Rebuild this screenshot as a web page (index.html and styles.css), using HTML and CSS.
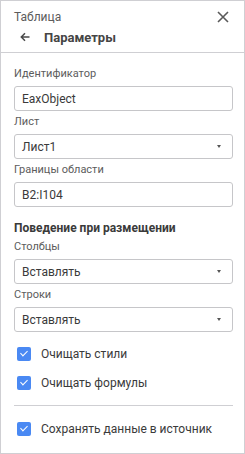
FILE: index.html
```html
<!DOCTYPE html>
<html>
    <head>
        <link rel="stylesheet" href="styles.css">
    </head>
    <body>
        <div class="panel">
            <div class="head">
                <div class="crumb">
                    <span>Таблица</span>
                    <svg class="close" width="12" height="12" viewBox="0 0 12 12">
                        <path d="M1 1L11 11M11 1L1 11" stroke="#5a5a5a" stroke-width="1.6" fill="none"/>
                    </svg>
                </div>
                <div class="title">
                    <svg class="back" width="10" height="10" viewBox="0 0 10 10">
                        <path d="M9.5 5H1.5M5 1.3L1.3 5L5 8.7" stroke="#4a4a4a" stroke-width="1.5" fill="none"/>
                    </svg>
                    <span>Параметры</span>
                </div>
            </div>

            <div class="content">
                <div class="field">
                    <div class="label">Идентификатор</div>
                    <div class="box">EaxObject</div>
                </div>
                <div class="field">
                    <div class="label">Лист</div>
                    <div class="box select">Лист1<span class="caret"></span></div>
                </div>
                <div class="field">
                    <div class="label">Границы области</div>
                    <div class="box">B2:I104</div>
                </div>

                <div class="section">Поведение при размещении</div>

                <div class="field">
                    <div class="label">Столбцы</div>
                    <div class="box select">Вставлять<span class="caret"></span></div>
                </div>
                <div class="field">
                    <div class="label">Строки</div>
                    <div class="box select">Вставлять<span class="caret"></span></div>
                </div>

                <div class="checks">
                    <div class="check"><span class="tick"></span>Очищать стили</div>
                    <div class="check"><span class="tick"></span>Очищать формулы</div>
                </div>
                <div class="divider"></div>
                <div class="check last"><span class="tick"></span>Сохранять данные в источник</div>
            </div>
        </div>
    </body>
</html>
```

FILE: styles.css
```css
body{
    margin:0;
    font-family: Roboto, "Noto Sans", sans-serif;
    background-color: white;
}
.panel{
    width:245px;
    height:454px;
    box-sizing: border-box;
    border:1px solid #cfcfd3;
}

/* header */
.head{
    height:52px;
    box-sizing: border-box;
    padding:8px 14px 0 13px;
    border-bottom:1px solid #cfcfd3;
}
.crumb{
    display:flex;
    justify-content: space-between;
    align-items: center;
    height:16px;
    font-size:12px;
    color:#5c5c5c;
}
.close{
    margin-right:1px;
}
.title{
    display:flex;
    align-items: center;
    height:20px;
    margin-top:2px;
    font-size:13px;
    font-weight:bold;
    color:#454545;
}
.back{
    margin-left:6px;
    margin-right:14px;
}

/* form */
.content{
    padding:13px 11px 0 13px;
}
.field{
    margin-bottom:3px;
}
.label{
    font-size:11px;
    line-height:16px;
    color:#5c5c5c;
    margin-bottom:4px;
}
.box{
    height:25px;
    box-sizing: border-box;
    border:1px solid #c6c6c9;
    border-radius:3px;
    padding:0 7px;
    display:flex;
    align-items: center;
    font-size:12px;
    color:#3a3a3a;
}
.select{
    justify-content: space-between;
}
.caret{
    width:0;
    height:0;
    border-left:2.5px solid transparent;
    border-right:2.5px solid transparent;
    border-top:3px solid #555;
    margin-right:4px;
}
.section{
    margin-top:13px;
    margin-bottom:3px;
    font-size:12px;
    line-height:16px;
    font-weight:bold;
    color:#3a3a3a;
}

/* checkboxes */
.checks{
    margin-top:7px;
}
.check{
    display:flex;
    align-items: center;
    height:29px;
    font-size:12px;
    color:#3a3a3a;
}
.tick{
    width:14px;
    height:14px;
    border-radius:2px;
    background-color: #4a89f3;
    margin-left:3px;
    margin-right:10px;
    position:relative;
}
.tick::after{
    content:"";
    position:absolute;
    left:4.5px;
    top:2px;
    width:3px;
    height:6px;
    border-right:1.6px solid white;
    border-bottom:1.6px solid white;
    transform: rotate(45deg);
}
.divider{
    height:1px;
    background-color: #cfcfd3;
    margin-top:8px;
    margin-bottom:8px;
}
```
